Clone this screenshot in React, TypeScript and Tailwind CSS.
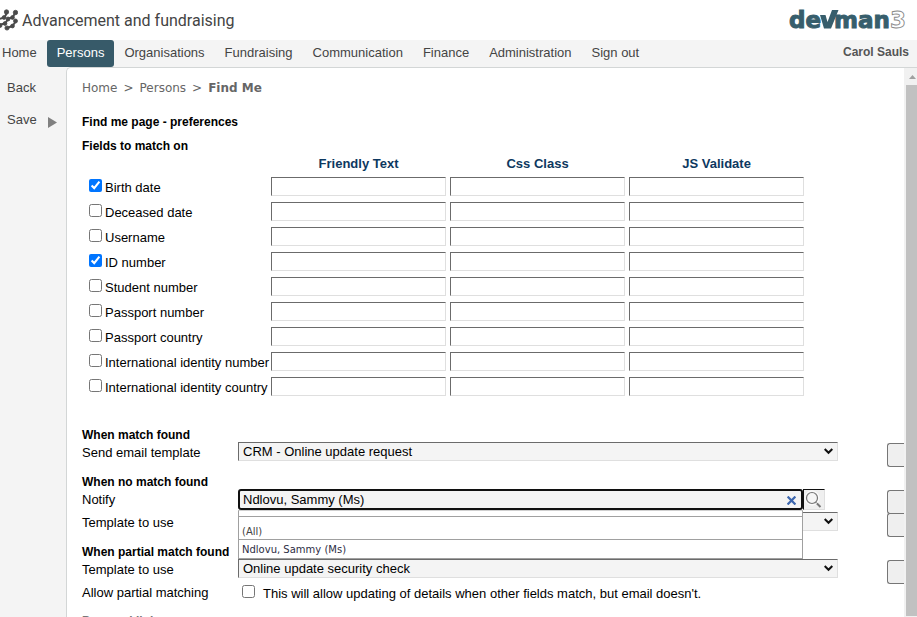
import React from "react";

const NAV = ["Home", "Persons", "Organisations", "Fundraising", "Communication", "Finance", "Administration", "Sign out"];

const FIELDS = [
  { label: "Birth date", checked: true },
  { label: "Deceased date", checked: false },
  { label: "Username", checked: false },
  { label: "ID number", checked: true },
  { label: "Student number", checked: false },
  { label: "Passport number", checked: false },
  { label: "Passport country", checked: false },
  { label: "International identity number", checked: false },
  { label: "International identity country", checked: false },
];

const COLUMNS = ["Friendly Text", "Css Class", "JS Validate"];

const inset = "border border-t-[#6b6b6b] border-l-[#6b6b6b] border-r-[#dfdfdf] border-b-[#dfdfdf]";

function BrandMark() {
  return (
    <svg className="h-[22px] w-[18px]" viewBox="0 0 18 22" fill="#4a4a4a" stroke="#4a4a4a" strokeWidth="2" strokeLinejoin="round" aria-hidden="true">
      <path d="M7 3.500 L4.500 8.500 L-1 10 M15.500 3.500 L12.500 8.500 L8.500 9.500 L5 14.500 L0 15.500 M16 12 L12.500 17 L7 19" fill="none" />
      <g strokeWidth="0.800">
        <circle cx="6.500" cy="3" r="2.200" />
        <circle cx="15.500" cy="3.500" r="2.200" />
        <circle cx="4" cy="8.500" r="1.900" />
        <circle cx="12.500" cy="8.500" r="1.900" />
        <circle cx="8" cy="10" r="2" />
        <circle cx="5" cy="14.500" r="1.900" />
        <circle cx="0" cy="16.500" r="2" />
        <circle cx="15.500" cy="12" r="2" />
        <circle cx="12.500" cy="17" r="1.900" />
        <circle cx="7" cy="19" r="2.100" />
      </g>
    </svg>
  );
}

function Logo() {
  return (
    <svg className="h-10 w-[118px]" viewBox="0 0 118 40" role="img" aria-label="devman3">
      <g fontFamily="DejaVu Sans, Verdana, sans-serif" fontSize="23" fontWeight="700">
        <text x="0" y="28" fill="#375e6c" stroke="#375e6c" strokeWidth="1">de</text>
        <path d="M31 15 L36.500 15 L38.500 22 L43 10 L49.500 10 L42 28.500 L35 28.500 Z" fill="#375e6c" />
        <text x="45" y="28" fill="#375e6c" stroke="#375e6c" strokeWidth="1">man</text>
        <text x="101" y="28" fill="#fff" stroke="#888" strokeWidth="0.900">3</text>
      </g>
    </svg>
  );
}

function Combo({ id, value }: { id: string; value: string }) {
  return (
    <div className="relative w-[600px] shrink-0">
      <select id={id} className={`block h-[19px] w-full appearance-none rounded-none bg-[#f4f4f4] pl-1 text-[13px] leading-4 ${inset}`}>
        <option>{value}</option>
      </select>
      <svg className="pointer-events-none absolute top-[6px] right-[5px] h-[7px] w-[9px]" viewBox="0 0 9 7" fill="none" stroke="#111" strokeWidth="2" aria-hidden="true">
        <path d="M0.700 1 L4.500 4.800 L8.300 1" />
      </svg>
    </div>
  );
}

function Row({ id, label, action, children }: { id: string; label: string; action?: boolean; children: React.ReactNode }) {
  return (
    <div className="flex h-[23px] items-start">
      <label htmlFor={id} className="w-[156px] shrink-0 leading-[22px]">{label}</label>
      {children}
      {action && <button type="button" aria-label={`${label} details`} className="mt-px ml-auto h-6 w-[17px] shrink-0 rounded-l-[3px] border border-r-0 border-[#767676] bg-[#efefef]" />}
    </div>
  );
}

export default function App() {
  return (
    <div className="flex h-screen flex-col overflow-hidden bg-white font-['Liberation_Sans',Arial,sans-serif] text-[13px] text-black">
      <header className="flex h-10 shrink-0 items-center bg-white pr-[10px]">
        <BrandMark />
        <h1 className="ml-1 flex-1 pt-[2px] font-[Roboto,sans-serif] text-base text-[#444]">Advancement and fundraising</h1>
        <Logo />
      </header>

      <nav className="flex h-[27px] shrink-0 items-stretch bg-[#f4f4f4] pr-2 leading-[25px] text-[#444]">
        {NAV.map((item) => (
          <a
            key={item}
            href="#"
            className={item === "Persons" ? "rounded-[3px] bg-[#375a69] px-[10px] text-white" : "whitespace-nowrap px-[10px] first:pl-[2px]"}
          >
            {item}
          </a>
        ))}
        <span className="ml-auto text-xs leading-6 font-bold whitespace-nowrap text-[#555]">Carol Sauls</span>
      </nav>

      <div className="flex min-h-0 flex-1 bg-[#f4f4f4]">
        <aside className="w-[66px] shrink-0 pt-[11px] pl-[7px] text-[#444]">
          <a href="#" className="block leading-5">Back</a>
          <a href="#" className="mt-3 flex items-center leading-5">
            Save
            <svg className="mt-1 mr-[9px] ml-auto h-[11px] w-[9px]" viewBox="0 0 9 11" fill="#808080" aria-hidden="true">
              <path d="M0 0 L9 5.500 L0 11 Z" />
            </svg>
          </a>
        </aside>

        <div className="flex min-w-0 flex-1 overflow-hidden rounded-tl-[5px] border-t border-l border-[#d3d6d6] bg-white">
          <main className="min-w-0 flex-1 overflow-hidden pl-[15px]">
            <div className="mt-[10px] flex gap-[6px] font-['DejaVu_Sans',Verdana,sans-serif] text-xs leading-5 text-[#666]">
              <a href="#">Home</a>
              <span>&gt;</span>
              <a href="#">Persons</a>
              <span>&gt;</span>
              <b>Find Me</b>
            </div>

            <h2 className="mt-[14px] text-xs leading-5 font-bold">Find me page - preferences</h2>
            <h2 className="mt-1 text-xs leading-5 font-bold">Fields to match on</h2>

            <table className="ml-[7px] border-separate border-spacing-0">
              <thead>
                <tr className="h-[18px] text-[#0d3860]">
                  <th className="w-[180px]" />
                  {COLUMNS.map((c) => (
                    <th key={c} className="p-0 text-center align-top leading-4">{c}</th>
                  ))}
                </tr>
              </thead>
              <tbody>
                {FIELDS.map((f) => (
                  <tr key={f.label} className="h-[25px]">
                    <td className="p-0">
                      <label className="flex items-start gap-[3px] pt-[2px] leading-[23px] whitespace-nowrap">
                        <input type="checkbox" defaultChecked={f.checked} className="mt-[3px] size-[13px] accent-[#0075ff]" />
                        {f.label}
                      </label>
                    </td>
                    {COLUMNS.map((c) => (
                      <td key={c} className="p-0 pr-[2px] pl-[2px]">
                        <input type="text" aria-label={`${f.label} ${c}`} className={`block h-[19px] w-[175px] bg-white ${inset}`} />
                      </td>
                    ))}
                  </tr>
                ))}
              </tbody>
            </table>

            <h2 className="mt-7 -mb-px text-xs leading-4 font-bold">When match found</h2>
            <Row id="email" label="Send email template" action>
              <Combo id="email" value="CRM - Online update request" />
            </Row>

            <h2 className="mt-[9px] -mb-px text-xs leading-4 font-bold">When no match found</h2>
            <Row id="notify" label="Notify" action>
              <div className="relative flex">
                <input
                  id="notify"
                  type="text"
                  defaultValue="Ndlovu, Sammy (Ms)"
                  className="h-[21px] w-[565px] rounded-[3px] border-2 border-[#101010] bg-[#f4f4f4] pl-[3px] text-[13px] outline-none"
                />
                <button type="button" aria-label="Clear" className="absolute top-[7px] left-[549px]">
                  <svg className="size-[9px]" viewBox="0 0 8 8" stroke="#3c66ae" strokeWidth="2" aria-hidden="true">
                    <path d="M0.500 0.500 L7.500 7.500 M7.500 0.500 L0.500 7.500" />
                  </svg>
                </button>
                <button type="button" aria-label="Search" className="h-[21px] w-[22px] border border-[#dfdfdf] border-t-[#101010] border-l-[#101010] bg-[#efefef]">
                  <svg className="size-[19px]" viewBox="0 0 19 19" fill="none" aria-hidden="true">
                    <path d="M11.500 12 L16.500 17" stroke="#777" strokeWidth="2" />
                    <circle cx="8" cy="8" r="7" stroke="#fff" />
                    <circle cx="8" cy="8" r="5.500" fill="#f6f6f6" stroke="#777" strokeWidth="1.200" />
                  </svg>
                </button>
                <ul className="absolute top-[21px] left-0 z-10 w-[565px] border border-[#a0a0a0] border-t-[#d0d0d0] bg-white font-['DejaVu_Sans',Verdana,sans-serif] text-[10px] text-[#444]">
                  <li className="mt-[5px] h-[23px] border-t border-[#a0a0a0] pt-[7px] pl-[3px] leading-4">(All)</li>
                  <li className="h-[19px] border-t border-[#a0a0a0] pl-[3px] leading-5 text-[#2d2d44]">Ndlovu, Sammy (Ms)</li>
                </ul>
              </div>
            </Row>
            <Row id="none" label="Template to use" action>
              <Combo id="none" value="" />
            </Row>

            <h2 className="mt-[9px] -mb-px text-xs leading-4 font-bold">When partial match found</h2>
            <Row id="partial" label="Template to use" action>
              <Combo id="partial" value="Online update security check" />
            </Row>
            <div className="flex h-[23px] items-start leading-[22px]">
              <span className="w-[156px] shrink-0">Allow partial matching</span>
              <label className="ml-1 flex items-start gap-2 leading-6">
                <input type="checkbox" className="mt-[3px] size-[13px]" />
                This will allow updating of details when other fields match, but email doesn't.
              </label>
            </div>
            <h2 className="mt-2 text-xs leading-4 font-bold text-[#777]">Personal link</h2>
          </main>

          <div className="flex w-[13px] shrink-0 flex-col items-end bg-[#f1f1f1]" aria-hidden="true">
            <svg className="h-[17px] w-[11px] shrink-0" viewBox="0 0 11 17" fill="#a0a0a0">
              <path d="M3 11 L6.500 7 L10 11 Z" />
            </svg>
            <div className="mb-px w-[11px] flex-1 bg-[#c1c1c1]" />
          </div>
        </div>
      </div>
    </div>
  );
}
